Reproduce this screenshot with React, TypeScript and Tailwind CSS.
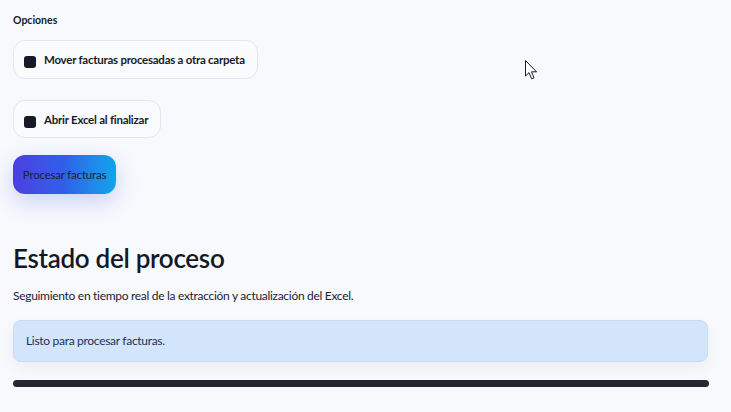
import React from 'react'

const font = { fontFamily: 'Lato, "Noto Sans", sans-serif' }

const Option = ({ label, h }: { label: string; h: string }) => (
  <label className={`inline-flex items-start gap-2 rounded-xl border border-[#e4e6ed] bg-[#fafbfd] pl-[10px] pr-3 pt-[11px] ${h}`}>
    <span className="mt-[4px] h-3 w-3 shrink-0 rounded-[3px] bg-[#151a26]" />
    <span className="text-[11.5px] font-bold leading-4 tracking-[-0.25px] text-[#161b28]">{label}</span>
  </label>
)

const Cursor = () => (
  <svg className="absolute left-[525px] top-[60px]" width="13" height="21" viewBox="0 0 13 21">
    <path
      d="M0.5 0.5 L0.5 16 L4 12.6 L6.6 18.8 L9 17.8 L6.5 11.8 L11.5 11.8 Z"
      fill="#ffffff"
      stroke="#1a1a1a"
      strokeWidth="1"
      strokeLinejoin="round"
    />
  </svg>
)

export default function App() {
  return (
    <div className="relative h-[412px] w-[731px] overflow-hidden bg-[#f8f9fc]" style={font}>
      <div className="flex flex-col px-[13px] pt-[12px]">
        <div className="text-[10.5px] font-bold leading-4 text-[#161b28]">Opciones</div>

        <div className="mt-[12px] flex flex-col items-start gap-[21px]">
          <Option label="Mover facturas procesadas a otra carpeta" h="h-[39px]" />
          <Option label="Abrir Excel al finalizar" h="h-[38px]" />
        </div>

        <button className="mt-[17px] h-[39px] w-[103px] rounded-xl bg-gradient-to-r from-[#4a3fe0] via-[#2f5fe9] to-[#0ea5e9] text-[11.5px] tracking-[-0.2px] text-[#1c2333] shadow-[0_8px_22px_rgba(80,110,240,0.28)]">
          Procesar facturas
        </button>

        <h2 className="mt-[46px] text-[26px] font-semibold leading-9 tracking-[-0.3px] text-[#111827]">
          Estado del proceso
        </h2>
        <p className="mt-[12px] text-[12px] leading-4 tracking-[-0.3px] text-[#1c2333]">
          Seguimiento en tiempo real de la extracción y actualización del Excel.
        </p>

        <div className="mt-[16px] mr-[10px] flex h-[42px] items-center rounded-lg border border-[#c9dcf3] bg-[#d3e5fa] px-3 shadow-[0_6px_14px_rgba(30,40,80,0.05)]">
          <span className="text-[12px] tracking-[-0.3px] text-[#1d3153]">Listo para procesar facturas.</span>
        </div>

        <div className="mt-[18px] mr-[9px] h-[7px] rounded-full bg-[#262730]" />
      </div>
      <Cursor />
    </div>
  )
}
